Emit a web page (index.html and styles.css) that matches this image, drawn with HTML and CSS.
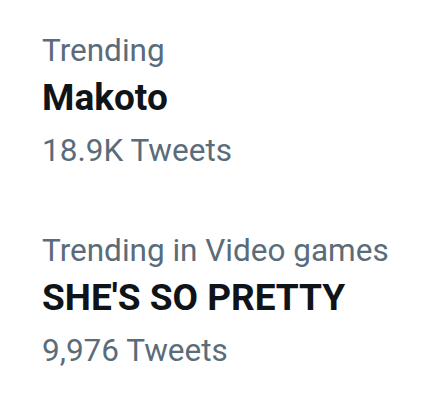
FILE: index.html
```html
<!DOCTYPE html>
<html>
<head>
<meta charset="utf-8">
<link rel="stylesheet" href="styles.css">
</head>
<body>
<div class="list">
  <div class="trend">
    <div class="meta">Trending</div>
    <div class="name">Makoto</div>
    <div class="count">18.9K Tweets</div>
  </div>
  <div class="trend">
    <div class="meta">Trending in Video games</div>
    <div class="name">SHE'S SO PRETTY</div>
    <div class="count">9,976 Tweets</div>
  </div>
</div>
</body>
</html>
```
FILE: styles.css
```css
html, body {
  margin: 0;
  padding: 0;
  background: #ffffff;
}
.list {
  display: flex;
  flex-direction: column;
  font-family: Roboto, "Noto Sans", sans-serif;
}
.trend {
  padding: 30px 0 23px 42px;
  display: flex;
  flex-direction: column;
}
.meta {
  font-size: 31.5px;
  line-height: 42px;
  color: #5a6c7a;
}
.name {
  font-size: 37px;
  line-height: 52px;
  font-weight: 700;
  color: #0f1419;
}
.count {
  font-size: 31.5px;
  line-height: 53px;
  color: #5a6c7a;
}
```
